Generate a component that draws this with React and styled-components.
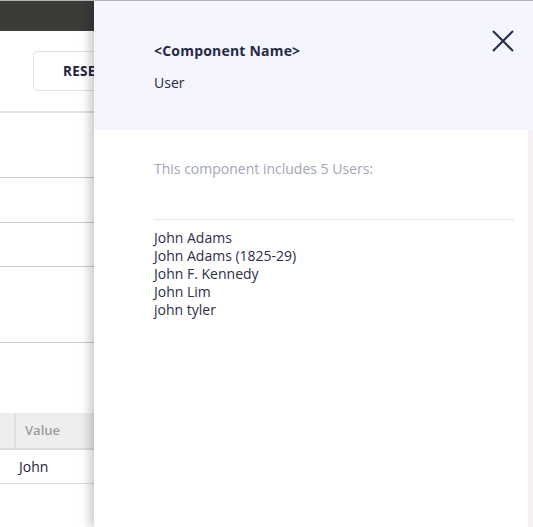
import styled, { createGlobalStyle } from "styled-components";

const GlobalStyle = createGlobalStyle`
  html, body {
    margin: 0;
    padding: 0;
    background: #ffffff;
    font-family: "Open Sans", "Noto Sans", sans-serif;
    overflow: hidden;
  }
`;

const Screen = styled.div`
  position: relative;
  width: 533px;
  height: 527px;
  border-top: 1px solid #b4b4b4;
  box-sizing: border-box;
  overflow: hidden;
`;

const TopBar = styled.div`
  height: 30px;
  background: #3a3c38;
`;

const Toolbar = styled.div`
  display: flex;
  align-items: center;
  height: 80px;
  padding-left: 33px;
  border-bottom: 2px solid #e2e2e2;
`;

const ResetButton = styled.button`
  height: 40px;
  width: 130px;
  padding: 0 0 0 29px;
  text-align: left;
  background: #fff;
  border: 1px solid #e2e2e2;
  border-radius: 4px;
  font-family: inherit;
  font-size: 13.5px;
  font-weight: 700;
  color: #1f2340;
  letter-spacing: 0.3px;
`;

const Section = styled.div`
  height: ${({ $h }) => $h}px;
  border-bottom: ${({ $last }) => ($last ? "none" : "1px solid #cdcdcd")};
  box-sizing: border-box;
`;

const Table = styled.div`
  display: grid;
  grid-template-columns: 14px 1fr;
`;

const HeadCell = styled.div`
  height: 37px;
  display: flex;
  align-items: center;
  padding-left: ${({ $first }) => ($first ? 0 : 9)}px;
  padding-bottom: 1px;
  box-sizing: border-box;
  background: #eeeeee;
  border-bottom: 2px solid #dcdcdc;
  border-left: ${({ $first }) => ($first ? "none" : "2px solid #e0e0e0")};
  font-size: 13px;
  font-weight: 600;
  color: #9b9b9b;
`;

const Cell = styled.div`
  height: 34px;
  display: flex;
  align-items: center;
  padding-left: ${({ $first }) => ($first ? 0 : 5)}px;
  padding-bottom: 1px;
  box-sizing: border-box;
  border-bottom: 1px solid #dedede;
  font-size: 14px;
  color: #1f2340;
`;

const Drawer = styled.aside`
  position: absolute;
  top: 0;
  right: 0;
  bottom: 0;
  width: 439px;
  display: flex;
  flex-direction: column;
  background: #fff;
  box-shadow: -4px 0 10px rgba(0, 0, 0, 0.22);
`;

const DrawerHeader = styled.header`
  position: relative;
  height: 129px;
  padding: 41px 19px 0 60px;
  box-sizing: border-box;
  background: #f5f5fd;
  color: #262a47;
`;

const Title = styled.div`
  font-size: 14px;
  font-weight: 700;
  line-height: 18px;
  letter-spacing: 0.2px;
`;

const Subtitle = styled.div`
  margin-top: 14px;
  font-size: 14px;
  line-height: 18px;
`;

const CloseButton = styled.button`
  position: absolute;
  top: 29px;
  right: 19px;
  width: 22px;
  height: 22px;
  padding: 0;
  border: none;
  background: none;
  color: #262a47;
`;

const DrawerBody = styled.div`
  flex: 1;
  display: flex;
`;

const BodyContent = styled.div`
  flex: 1;
  padding: 30px 14px 0 60px;
`;

const Scrollbar = styled.div`
  width: 5px;
  background: #f6f0f4;
`;

const Intro = styled.p`
  margin: 0;
  font-size: 14px;
  line-height: 18px;
  color: #a3a5b8;
`;

const Divider = styled.hr`
  margin: 41px 0 9px;
  border: none;
  border-top: 1px solid #e6e6e6;
`;

const UserList = styled.ul`
  margin: 0;
  padding: 0;
  list-style: none;
`;

const UserItem = styled.li`
  font-size: 14px;
  line-height: 18px;
  color: #2b2e48;
`;

const users = [
  "John Adams",
  "John Adams (1825-29)",
  "John F. Kennedy",
  "John Lim",
  "john tyler",
];

export default function App() {
  return (
    <>
      <GlobalStyle />
      <Screen>
        <TopBar />
        <Toolbar>
          <ResetButton>RESET</ResetButton>
        </Toolbar>
        <Section $h={65} />
        <Section $h={45} />
        <Section $h={44} />
        <Section $h={76} />
        <Section $h={70} $last />
        <Table>
          <HeadCell $first />
          <HeadCell>Value</HeadCell>
          <Cell $first />
          <Cell>John</Cell>
        </Table>

        <Drawer>
          <DrawerHeader>
            <Title>&lt;Component Name&gt;</Title>
            <Subtitle>User</Subtitle>
            <CloseButton aria-label="Close">
              <svg width="22" height="22" viewBox="0 0 22 22">
                <path
                  d="M1 1 L21 21 M21 1 L1 21"
                  stroke="currentColor"
                  strokeWidth="2"
                  fill="none"
                />
              </svg>
            </CloseButton>
          </DrawerHeader>
          <DrawerBody>
            <BodyContent>
              <Intro>This component includes 5 Users:</Intro>
              <Divider />
              <UserList>
                {users.map((u) => (
                  <UserItem key={u}>{u}</UserItem>
                ))}
              </UserList>
            </BodyContent>
            <Scrollbar />
          </DrawerBody>
        </Drawer>
      </Screen>
    </>
  );
}
